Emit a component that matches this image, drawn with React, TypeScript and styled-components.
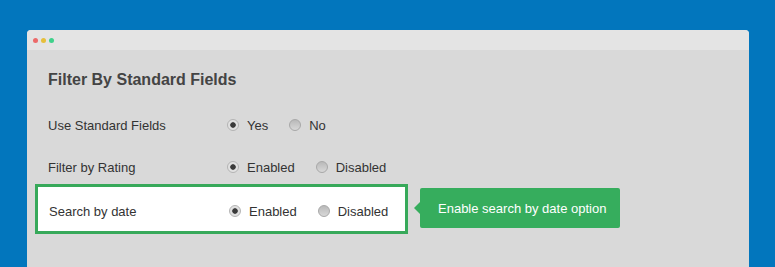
import { createGlobalStyle } from "styled-components";
import styled from "styled-components";

const GlobalStyle = createGlobalStyle`
  html, body {
    margin: 0;
    padding: 0;
    background: #0276bd;
    font-family: "Liberation Sans", Arial, sans-serif;
  }
`;

const Page = styled.div`
  height: 267px;
  padding: 30px 26px 0 27px;
  box-sizing: border-box;
  overflow: hidden;
`;

const Window = styled.div`
  background: #d9d9d9;
  border-radius: 4px 4px 0 0;
  height: 237px;
  overflow: hidden;
`;

const TitleBar = styled.div`
  height: 20px;
  background: #e4e4e4;
  display: flex;
  align-items: center;
  gap: 3px;
  padding-left: 6px;
`;

const Dot = styled.span<{ $color: string }>`
  width: 5px;
  height: 5px;
  border-radius: 50%;
  background: ${(p) => p.$color};
`;

const Body = styled.div`
  padding: 20px 0 0 21px;
`;

const Title = styled.h2`
  margin: 0 0 25px;
  font-size: 16px;
  line-height: 20px;
  font-weight: 700;
  color: #444;
`;

const Row = styled.div`
  display: flex;
  align-items: center;
  height: 20px;
  margin-bottom: 22px;
  font-size: 13px;
  color: #333;
`;

const Label = styled.div`
  width: 179px;
`;

const Options = styled.div`
  display: flex;
  align-items: center;
  gap: 21px;
`;

const Option = styled.label`
  display: flex;
  align-items: center;
  gap: 8px;
`;

const Radio = styled.span<{ $checked?: boolean }>`
  width: 12px;
  height: 12px;
  box-sizing: border-box;
  border-radius: 50%;
  border: 1px solid ${(p) => (p.$checked ? "#b4b4b4" : "#a8a8a8")};
  background: ${(p) =>
    p.$checked
      ? "radial-gradient(circle, #3a3a3a 0 2.4px, #b0b0b0 2.9px, #e2e2e2 3.6px 100%)"
      : "linear-gradient(#b9b9b9, #d8d8d8)"};
`;

const HighlightLine = styled.div`
  display: flex;
  align-items: center;
  margin: -15px 0 0 -13px;
  gap: 12px;
`;

const HighlightBox = styled.div`
  display: flex;
  align-items: center;
  width: 373px;
  height: 50px;
  box-sizing: border-box;
  border: 3px solid #37a95a;
  background: #fff;
  padding: 4px 0 0 11px;
  font-size: 13px;
  color: #333;
`;

const BoxLabel = styled.div`
  width: 180px;
`;

const Tooltip = styled.div`
  position: relative;
  background: #36ad5d;
  color: #fff;
  font-size: 13px;
  height: 40px;
  width: 200px;
  box-sizing: border-box;
  padding-left: 18px;
  display: flex;
  align-items: center;
  border-radius: 2px;
  margin-top: -2px;

  &::before {
    content: "";
    position: absolute;
    left: -6px;
    top: 50%;
    margin-top: -6px;
    border-style: solid;
    border-width: 6px 6px 6px 0;
    border-color: transparent #36ad5d transparent transparent;
  }
`;

function RadioGroup({ options, selected }: { options: string[]; selected: number }) {
  return (
    <Options>
      {options.map((o, i) => (
        <Option key={o}>
          <Radio $checked={i === selected} />
          {o}
        </Option>
      ))}
    </Options>
  );
}

export default function App() {
  return (
    <>
      <GlobalStyle />
      <Page>
        <Window>
          <TitleBar>
            <Dot $color="#ec6a6a" />
            <Dot $color="#e6bf3b" />
            <Dot $color="#3fd18b" />
          </TitleBar>
          <Body>
            <Title>Filter By Standard Fields</Title>
            <Row>
              <Label>Use Standard Fields</Label>
              <RadioGroup options={["Yes", "No"]} selected={0} />
            </Row>
            <Row>
              <Label>Filter by Rating</Label>
              <RadioGroup options={["Enabled", "Disabled"]} selected={0} />
            </Row>
            <HighlightLine>
              <HighlightBox>
                <BoxLabel>Search by date</BoxLabel>
                <RadioGroup options={["Enabled", "Disabled"]} selected={0} />
              </HighlightBox>
              <Tooltip>Enable search by date option</Tooltip>
            </HighlightLine>
          </Body>
        </Window>
      </Page>
    </>
  );
}
